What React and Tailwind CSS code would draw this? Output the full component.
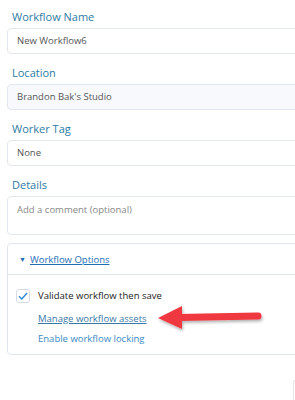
import React from 'react';

const Label = ({ children }) => (
  <div className="text-[11px] leading-[14px] text-[#2c7aa3] mb-[4px] pl-[5px]">{children}</div>
);

const Field = ({ value, bg }) => (
  <div
    className={`h-[26px] w-[320px] rounded-[4px] border border-[#e2e7ef] flex items-center pl-[9px] text-[9.5px] text-[#555] ${bg ? 'bg-[#f7f9fd]' : 'bg-white'}`}
  >
    {value}
  </div>
);

export default function App() {
  return (
    <div
      className="w-[295px] h-[400px] overflow-hidden bg-white relative"
      style={{ fontFamily: '"Open Sans", "Noto Sans", sans-serif' }}
    >
      <div className="pl-[7px] pt-[10px]">
        <Label>Workflow Name</Label>
        <Field value="New Workflow6" />

        <div className="mt-[12px]">
          <Label>Location</Label>
          <Field value="Brandon Bak's Studio" bg />
        </div>

        <div className="mt-[12px]">
          <Label>Worker Tag</Label>
          <Field value="None" />
        </div>

        <div className="mt-[12px]">
          <Label>Details</Label>
          <div className="h-[39px] w-[320px] rounded-[4px] border border-[#e2e7ef] pl-[9px] pt-[6px] text-[9.5px] text-[#888]">
            Add a comment (optional)
          </div>
        </div>

        <div className="mt-[8px] w-[320px] h-[112px] rounded-[4px] border border-[#dfe5ee]">
          <div className="h-[31px] border-b border-[#dfe5ee] flex items-center pl-[11px] pt-[2px] gap-[4px]">
            <span className="text-[7px] text-[#1e6db6]">▼</span>
            <span className="text-[9.5px] text-[#1e6db6] underline">Workflow Options</span>
          </div>
          <div className="pl-[8px] pt-[13px]">
            <div className="flex items-center gap-[8px] h-[16px]">
              <div className="w-[14px] h-[14px] rounded-[3px] border border-[#d6dce5] flex items-center justify-center">
                <svg width="10" height="8" viewBox="0 0 10 8">
                  <path d="M1 4.2 L3.8 7 L9 1" fill="none" stroke="#2a86d6" strokeWidth="1.3" />
                </svg>
              </div>
              <span className="text-[9.5px] text-[#222]">Validate workflow then save</span>
            </div>
            <div className="pl-[22px] mt-[5px] text-[9.5px] leading-[20px] text-[#3a78a8] underline">
              Manage workflow assets
            </div>
            <div className="pl-[22px] text-[9.5px] leading-[20px] text-[#3a8ac4]">Enable workflow locking</div>
          </div>
        </div>

        <div className="mt-[25px] ml-[286px] w-[60px] h-[30px] border-l border-t border-[#e5e7eb] rounded-tl-[3px]" />
      </div>

      <svg className="absolute left-0 top-0" width="295" height="400" viewBox="0 0 295 400">
        <defs>
          <filter id="sh" x="-20%" y="-50%" width="140%" height="200%">
            <feDropShadow dx="1" dy="2" stdDeviation="1.5" floodColor="#000" floodOpacity="0.3" />
          </filter>
        </defs>
        <g filter="url(#sh)">
          <line x1="178" y1="317.5" x2="258" y2="316" stroke="#f0373f" strokeWidth="7" strokeLinecap="round" />
          <polygon points="158,318 182,306 182,329" fill="#f0373f" />
        </g>
      </svg>
    </div>
  );
}
